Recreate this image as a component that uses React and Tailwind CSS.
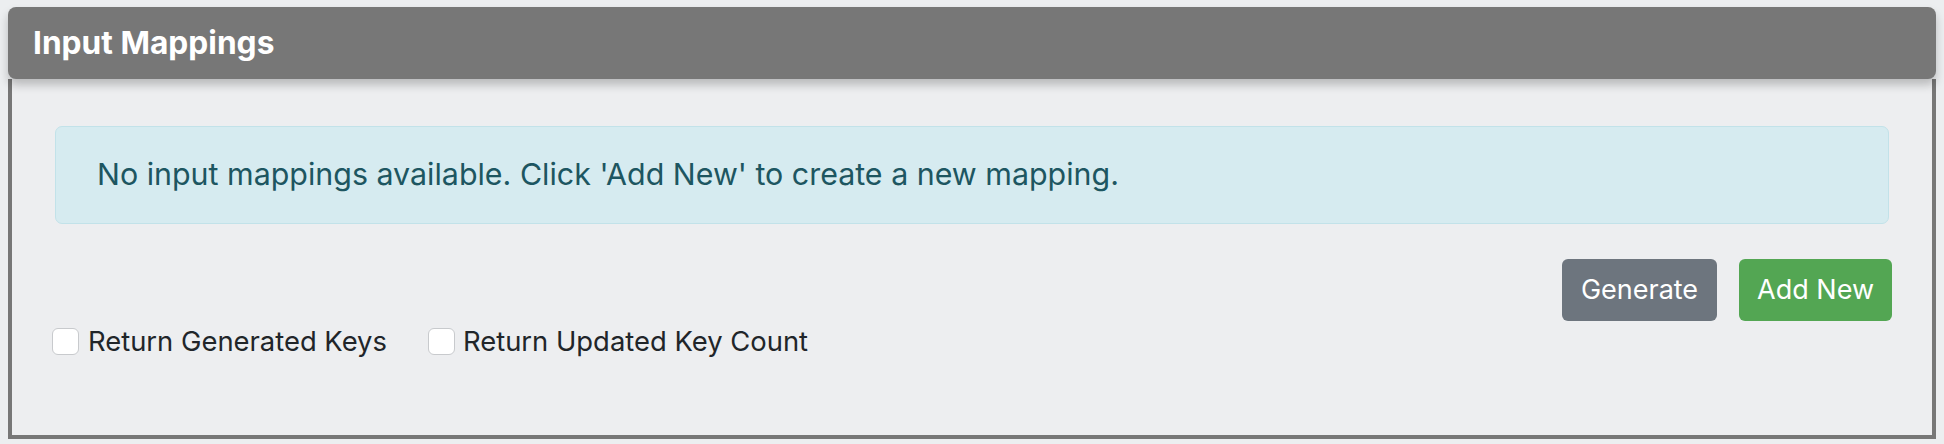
export default function App() {
  const font = { fontFamily: 'Inter, "Noto Sans", sans-serif' };
  return (
    <div className="w-[1944px] h-[444px] bg-[#eceef0] pt-[7px] px-[8px]" style={font}>
      <div className="relative z-10 h-[72px] rounded-[8px] bg-[#777777] flex items-center pl-[25px] shadow-[0_6px_10px_rgba(0,0,0,0.22)]">
        <span className="text-white font-bold text-[31.7px] tracking-[0px]">Input Mappings</span>
      </div>
      <div className="h-[360px] border-x-4 border-b-4 border-[#777777] bg-[#edeef0] px-[40px] pt-[47px]">
        <div className="mx-[3px] h-[98px] rounded-[7px] border border-[#c2e2e9] bg-[#d6ebf0] flex items-center pl-[41px] text-[#1d5661] text-[30.4px]">
          No input mappings available. Click 'Add New' to create a new mapping.
        </div>
        <div className="mt-[35px] flex justify-end gap-[22px]">
          <button className="h-[62px] w-[155px] rounded-[6px] bg-[#6d757e] text-white text-[27px]">Generate</button>
          <button className="h-[62px] w-[153px] rounded-[6px] bg-[#53a653] text-white text-[27px]">Add New</button>
        </div>
        <div className="flex items-center h-[42px] text-[#212529] text-[27.4px]">
          <label className="flex items-center">
            <span className="w-[27px] h-[27px] rounded-[6px] border border-[#c8cacd] bg-white"></span>
            <span className="ml-[9px]">Return Generated Keys</span>
          </label>
          <label className="flex items-center ml-[41px]">
            <span className="w-[27px] h-[27px] rounded-[6px] border border-[#c8cacd] bg-white"></span>
            <span className="ml-[8px]">Return Updated Key Count</span>
          </label>
        </div>
      </div>
    </div>
  );
}
